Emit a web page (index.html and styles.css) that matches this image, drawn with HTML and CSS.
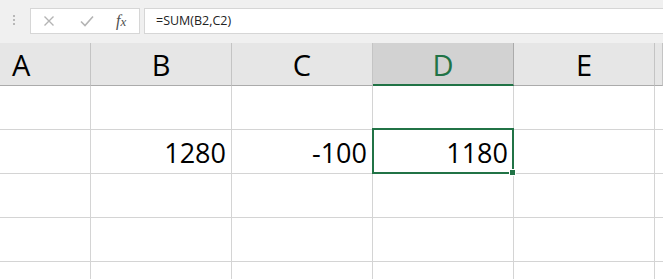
FILE: index.html
```html
<!DOCTYPE html>
<html lang="en">
<head>
    <meta charset="UTF-8">
    <meta name="viewport" content="width=device-width, initial-scale=1.0">
    <title>Sheet</title>
    <link rel="stylesheet" href="styles.css">
</head>
<body>
    <div class="formula-bar">
        <div class="grip">
            <span></span><span></span><span></span>
        </div>
        <div class="fx-box">
            <svg class="icon" width="12" height="12" viewBox="0 0 12 12">
                <path d="M1.5 1.5 L10.5 10.5 M10.5 1.5 L1.5 10.5" stroke="#b4b4b4" stroke-width="1.4" fill="none"/>
            </svg>
            <svg class="icon" width="14" height="12" viewBox="0 0 14 12">
                <path d="M1 6.5 L5 10.5 L13 1.5" stroke="#b4b4b4" stroke-width="1.6" fill="none"/>
            </svg>
            <span class="fx">f<span class="fx-x">x</span></span>
        </div>
        <div class="formula-input">=SUM(B2,C2)</div>
    </div>

    <div class="sheet">
        <div class="col-head first">A</div>
        <div class="col-head">B</div>
        <div class="col-head">C</div>
        <div class="col-head active">D</div>
        <div class="col-head">E</div>
        <div class="col-head"></div>

        <div class="cell"></div>
        <div class="cell"></div>
        <div class="cell"></div>
        <div class="cell"></div>
        <div class="cell"></div>
        <div class="cell"></div>

        <div class="cell"></div>
        <div class="cell">1280</div>
        <div class="cell">-100</div>
        <div class="cell selected">1180<span class="select-box"><span class="handle"></span></span></div>
        <div class="cell"></div>
        <div class="cell"></div>

        <div class="cell"></div>
        <div class="cell"></div>
        <div class="cell"></div>
        <div class="cell"></div>
        <div class="cell"></div>
        <div class="cell"></div>

        <div class="cell"></div>
        <div class="cell"></div>
        <div class="cell"></div>
        <div class="cell"></div>
        <div class="cell"></div>
        <div class="cell"></div>

        <div class="cell last"></div>
        <div class="cell last"></div>
        <div class="cell last"></div>
        <div class="cell last"></div>
        <div class="cell last"></div>
        <div class="cell last"></div>
    </div>
</body>
</html>
```

FILE: styles.css
```css
/* Global Styles */
body {
    margin: 0;
    padding: 0;
    width: 663px;
    height: 279px;
    overflow: hidden;
    background: #fff;
    font-family: 'Open Sans', sans-serif;
    color: #000;
}

/* Formula bar */
.formula-bar {
    display: flex;
    align-items: flex-start;
    height: 43px;
    padding-top: 8px;
    box-sizing: border-box;
    background: #f0f0f0;
}

.grip {
    display: flex;
    flex-direction: column;
    gap: 2px;
    width: 2px;
    margin: 7px 14px 0 13px;
}

.grip span {
    width: 2px;
    height: 2px;
    background: #b8b8b8;
}

.fx-box {
    display: flex;
    align-items: center;
    width: 110px;
    height: 26px;
    box-sizing: border-box;
    border: 1px solid #d6d6d6;
    background: #fff;
    margin-left: 1px;
}

.icon {
    display: block;
}

.fx-box .icon:first-child {
    margin-left: 12px;
}

.fx-box .icon:nth-child(2) {
    margin-left: 25px;
}

.fx {
    margin-left: 22px;
    font-family: 'Liberation Serif', serif;
    font-style: italic;
    font-size: 16px;
    color: #505050;
    line-height: 1;
}

.fx-x {
    font-size: 13px;
}

.formula-input {
    flex: 1;
    height: 26px;
    box-sizing: border-box;
    margin-left: 4px;
    padding-left: 11px;
    border: 1px solid #d6d6d6;
    border-right: none;
    background: #fff;
    font-size: 12.5px;
    line-height: 24px;
    color: #222;
}

/* Sheet grid */
.sheet {
    display: grid;
    grid-template-columns: 91px repeat(4, 141px) 8px;
    grid-template-rows: 43px repeat(4, 44px) 17px;
}

.col-head {
    box-sizing: border-box;
    background: #e6e6e6;
    border-right: 1px solid #c4c4c4;
    border-bottom: 1px solid #ababab;
    text-align: center;
    font-size: 29px;
    line-height: 1;
    padding-top: 7px;
    color: #000;
}

.col-head.first {
    text-align: left;
    padding-left: 12px;
}

.col-head.active {
    background: #d2d2d2;
    color: #217346;
    border-bottom: 2px solid #217346;
    border-right-color: #ababab;
}

.cell {
    box-sizing: border-box;
    border-right: 1px solid #d4d4d4;
    border-bottom: 1px solid #d4d4d4;
    display: flex;
    align-items: flex-end;
    justify-content: flex-end;
    padding: 0 5px 7px;
    font-size: 27px;
    line-height: 1;
}

.cell.last {
    border-bottom: none;
}

.selected {
    position: relative;
}

.select-box {
    position: absolute;
    top: -2px;
    left: -1px;
    right: -1px;
    bottom: -1px;
    border: 2px solid #217346;
}

.handle {
    position: absolute;
    right: -4px;
    bottom: -4px;
    width: 5px;
    height: 5px;
    background: #217346;
    border: 1px solid #fff;
}
```
